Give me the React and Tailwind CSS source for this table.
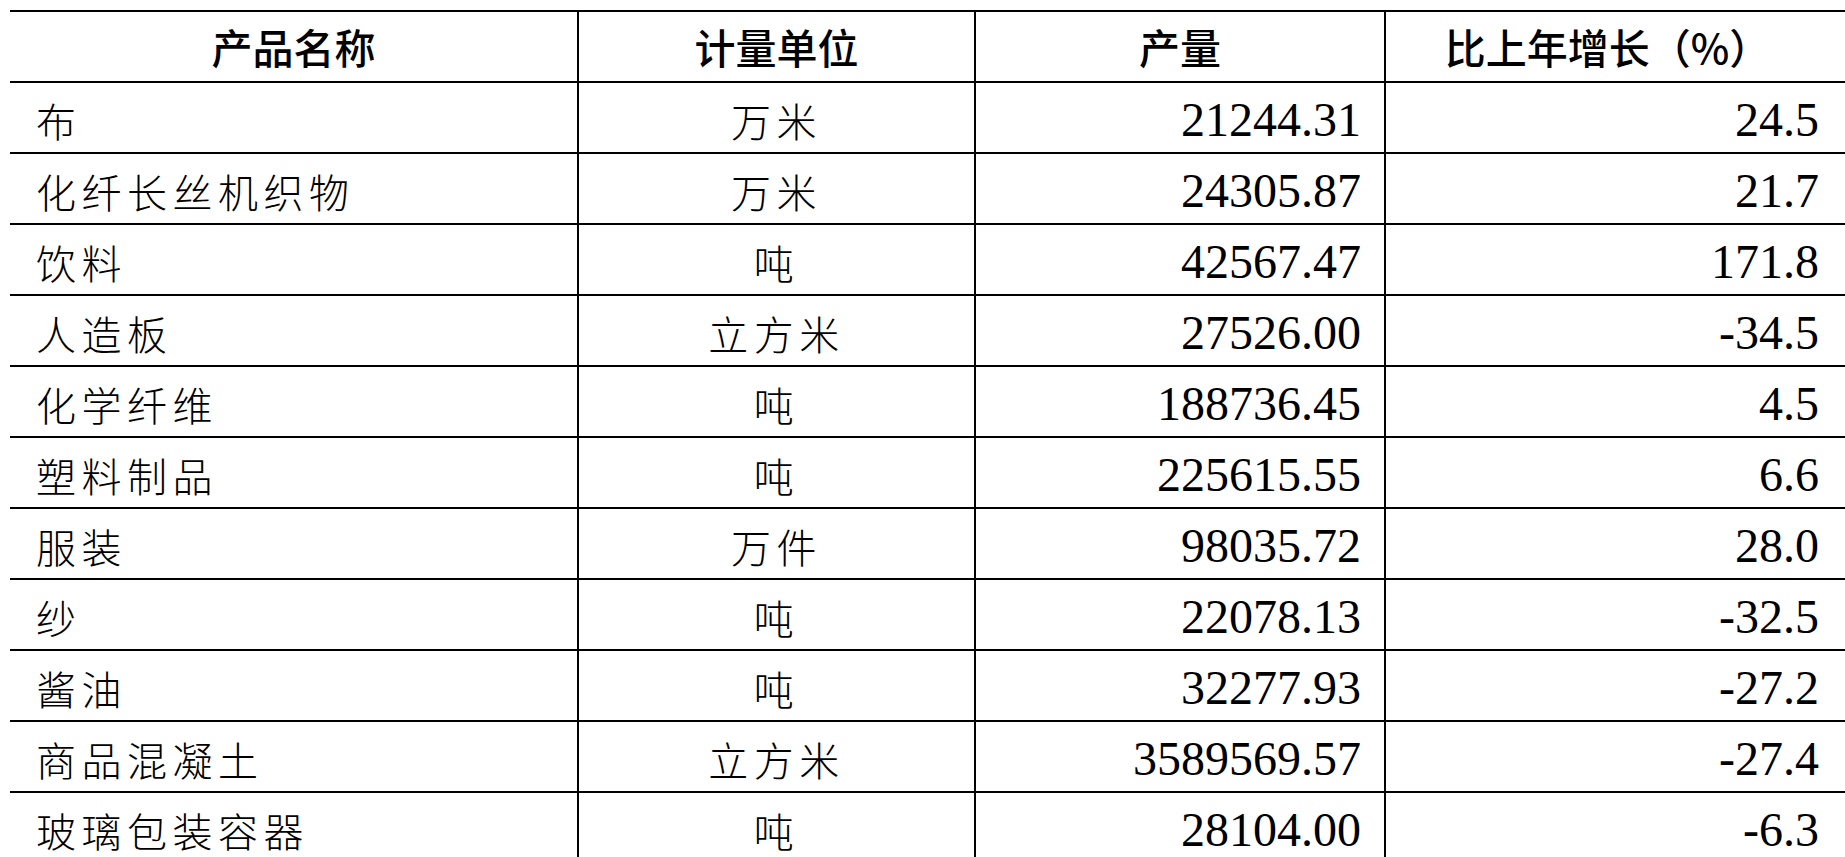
const rows = [
  ["布", "万米", "21244.31", "24.5"],
  ["化纤长丝机织物", "万米", "24305.87", "21.7"],
  ["饮料", "吨", "42567.47", "171.8"],
  ["人造板", "立方米", "27526.00", "-34.5"],
  ["化学纤维", "吨", "188736.45", "4.5"],
  ["塑料制品", "吨", "225615.55", "6.6"],
  ["服装", "万件", "98035.72", "28.0"],
  ["纱", "吨", "22078.13", "-32.5"],
  ["酱油", "吨", "32277.93", "-27.2"],
  ["商品混凝土", "立方米", "3589569.57", "-27.4"],
  ["玻璃包装容器", "吨", "28104.00", "-6.3"],
];

export default function App() {
  return (
    <div className="w-[1845px] h-[857px] overflow-hidden bg-white pt-[10px] pl-[10px] text-black">
      <table className="w-[1835px] border-collapse table-fixed">
        <colgroup>
          <col className="w-[568px]" />
          <col className="w-[397px]" />
          <col className="w-[410px]" />
          <col />
        </colgroup>
        <thead>
          <tr className="h-[71px] font-['Noto_Sans_CJK_SC',sans-serif] text-[41px]">
            <th className="border-y-2 border-black text-center font-medium p-0">产品名称</th>
            <th className="border-y-2 border-l-2 border-black text-center font-medium p-0">计量单位</th>
            <th className="border-y-2 border-l-2 border-black text-center font-medium p-0">产量</th>
            <th className="border-y-2 border-l-2 border-black text-center font-medium p-0 pr-4">比上年增长（%）</th>
          </tr>
        </thead>
        <tbody>
          {rows.map((r) => (
            <tr key={r[0]} className="h-[71px]">
              <td className="border-y-2 border-black pl-[26px] pt-1 font-['Noto_Sans_CJK_SC',sans-serif] text-[40px] font-light tracking-[5.5px] leading-none">
                {r[0]}
              </td>
              <td className="border-y-2 border-l-2 border-black text-center pt-1 font-['Noto_Sans_CJK_SC',sans-serif] text-[40px] font-light tracking-[5.5px] leading-none">
                {r[1]}
              </td>
              <td className="border-y-2 border-l-2 border-black text-right pr-[23px] pt-1 font-['Liberation_Serif',serif] text-[48px] leading-none">
                {r[2]}
              </td>
              <td className="border-y-2 border-l-2 border-black text-right pr-[26px] pt-1 font-['Liberation_Serif',serif] text-[48px] leading-none">
                {r[3]}
              </td>
            </tr>
          ))}
        </tbody>
      </table>
    </div>
  );
}
